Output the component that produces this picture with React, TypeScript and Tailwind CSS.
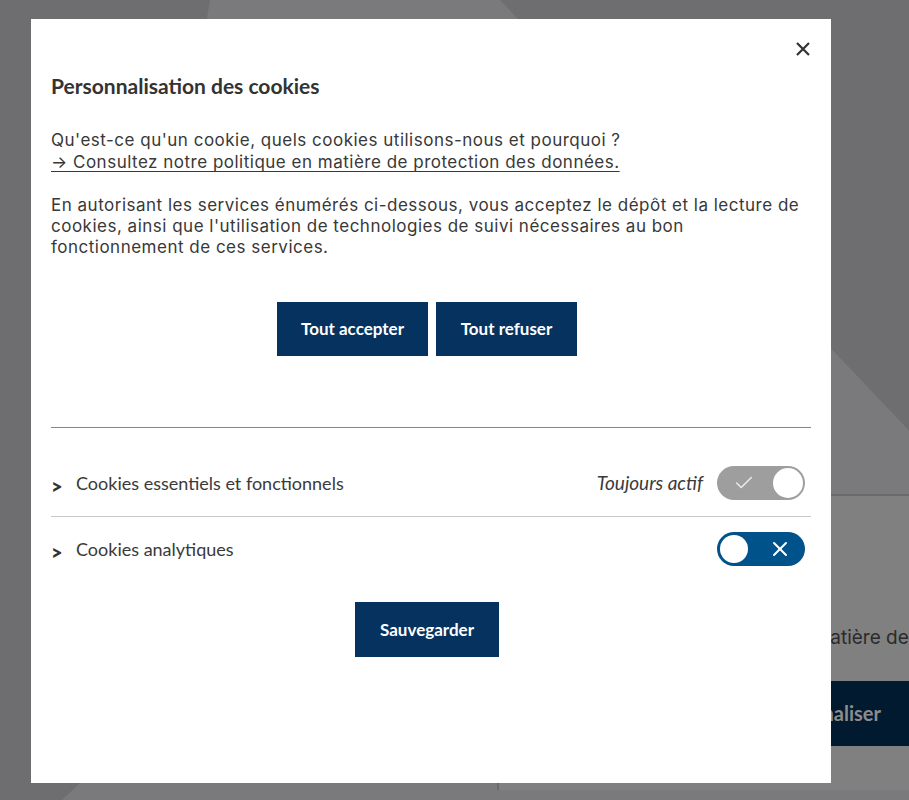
import { Check, X } from "lucide-react";

const body = "font-['Inter',sans-serif]";
const ui = "font-['Lato','Noto_Sans',sans-serif]";

function Toggle({ on, locked }: { on: boolean; locked?: boolean }) {
  if (locked) {
    return (
      <div className="flex h-[34px] w-[88px] items-center justify-between rounded-full bg-[#9e9e9e] p-[2px] pl-[16px]">
        <Check className="h-[22px] w-[22px] text-[#ececec]" strokeWidth={1.6} />
        <span className="h-[30px] w-[30px] rounded-full bg-white" />
      </div>
    );
  }
  return (
    <div className="flex h-[34px] w-[88px] items-center justify-between rounded-full bg-[#00528a] p-[3px] pr-[13px]">
      <span className={`h-[28px] w-[28px] rounded-full bg-white ${on ? "order-2" : ""}`} />
      <X className="h-[24px] w-[24px] text-white" strokeWidth={2} />
    </div>
  );
}

function Row({ label, children, className }: { label: string; children: React.ReactNode; className: string }) {
  return (
    <div className={`flex items-center justify-between pr-[6px] ${className}`}>
      <div className={`flex items-center ${ui} text-[18px] text-[#3a3a3a]`}>
        <span className="mt-[5px] w-[25px] text-[20px] font-black leading-none text-[#333]">&gt;</span>
        <span>{label}</span>
      </div>
      <div className="flex items-center gap-[14px]">{children}</div>
    </div>
  );
}

export default function App() {
  return (
    <div className="relative h-[800px] w-[909px] overflow-hidden bg-[#6e6e70]">
      {/* backdrop shapes seen through the overlay */}
      <svg className="absolute inset-0" width="909" height="800" viewBox="0 0 909 800">
        <polygon points="210,0 500,0 1260,800 62,800 80,783" fill="#7a7a7c" />
      </svg>

      {/* the banner sitting under the overlay */}
      <div className="absolute left-[497px] top-[494px] h-[296px] w-[420px] overflow-hidden border-t-2 border-l-2 border-[#6a6a6a] bg-[#808080]">
        <p className={`ml-[287px] mt-[128px] whitespace-nowrap ${body} text-[19px] text-[#2b2b2b]`}>
          en matière de
        </p>
        <div className={`ml-auto mt-[28px] flex h-[65px] w-[220px] items-center justify-end pr-[36px] bg-[#011a30] ${ui} text-[20px] font-bold text-[#8c8c8c]`}>
          Personnaliser
        </div>
      </div>

      <div className="absolute inset-0 pl-[31px] pt-[19px]">
        <div className="relative flex h-[764px] w-[800px] flex-col bg-white px-[20px] pt-[54px]">
          <button className="absolute right-[21px] top-[23px] text-[#333]">
            <svg width="14" height="14" viewBox="0 0 14 14">
              <path d="M1 1L13 13M13 1L1 13" stroke="currentColor" strokeWidth="2.2" />
            </svg>
          </button>

          <h2 className={`${ui} text-[21px] font-bold leading-[26px] text-[#333]`}>Personnalisation des cookies</h2>

          <div className={`${body} text-[17px] tracking-[0.5px] text-[#383838]`}>
            <p className="mt-[30px] leading-[22px]">
              Qu'est-ce qu'un cookie, quels cookies utilisons-nous et pourquoi ?
              <br />
              <a className="underline underline-offset-[3px]">→ Consultez notre politique en matière de protection des données.</a>
            </p>
            <p className="mt-[22px] leading-[21px]">
              En autorisant les services énumérés ci-dessous, vous acceptez le dépôt et la lecture de cookies, ainsi que
              l'utilisation de technologies de suivi nécessaires au bon fonctionnement de ces services.
            </p>
          </div>

          <div className={`mt-[44px] flex justify-center gap-[8px] pr-[8px] ${ui} text-[17px] font-bold text-white`}>
            <button className="h-[54px] w-[151px] bg-[#05325e]">Tout accepter</button>
            <button className="h-[54px] w-[141px] bg-[#05325e]">Tout refuser</button>
          </div>

          <div className="mt-[71px] border-t border-[#858585]" />

          <Row label="Cookies essentiels et fonctionnels" className="pt-[38px] pb-[16px] border-b border-[#c8c8c8]">
            <span className={`${ui} text-[19px] italic text-[#3a3a3a]`}>Toujours actif</span>
            <Toggle on locked />
          </Row>

          <Row label="Cookies analytiques" className="pt-[15px]">
            <Toggle on={false} />
          </Row>

          <div className="mt-[36px] flex justify-center pr-[8px]">
            <button className={`h-[55px] w-[144px] bg-[#05325e] ${ui} text-[17px] font-bold text-white`}>Sauvegarder</button>
          </div>
        </div>
      </div>
    </div>
  );
}
